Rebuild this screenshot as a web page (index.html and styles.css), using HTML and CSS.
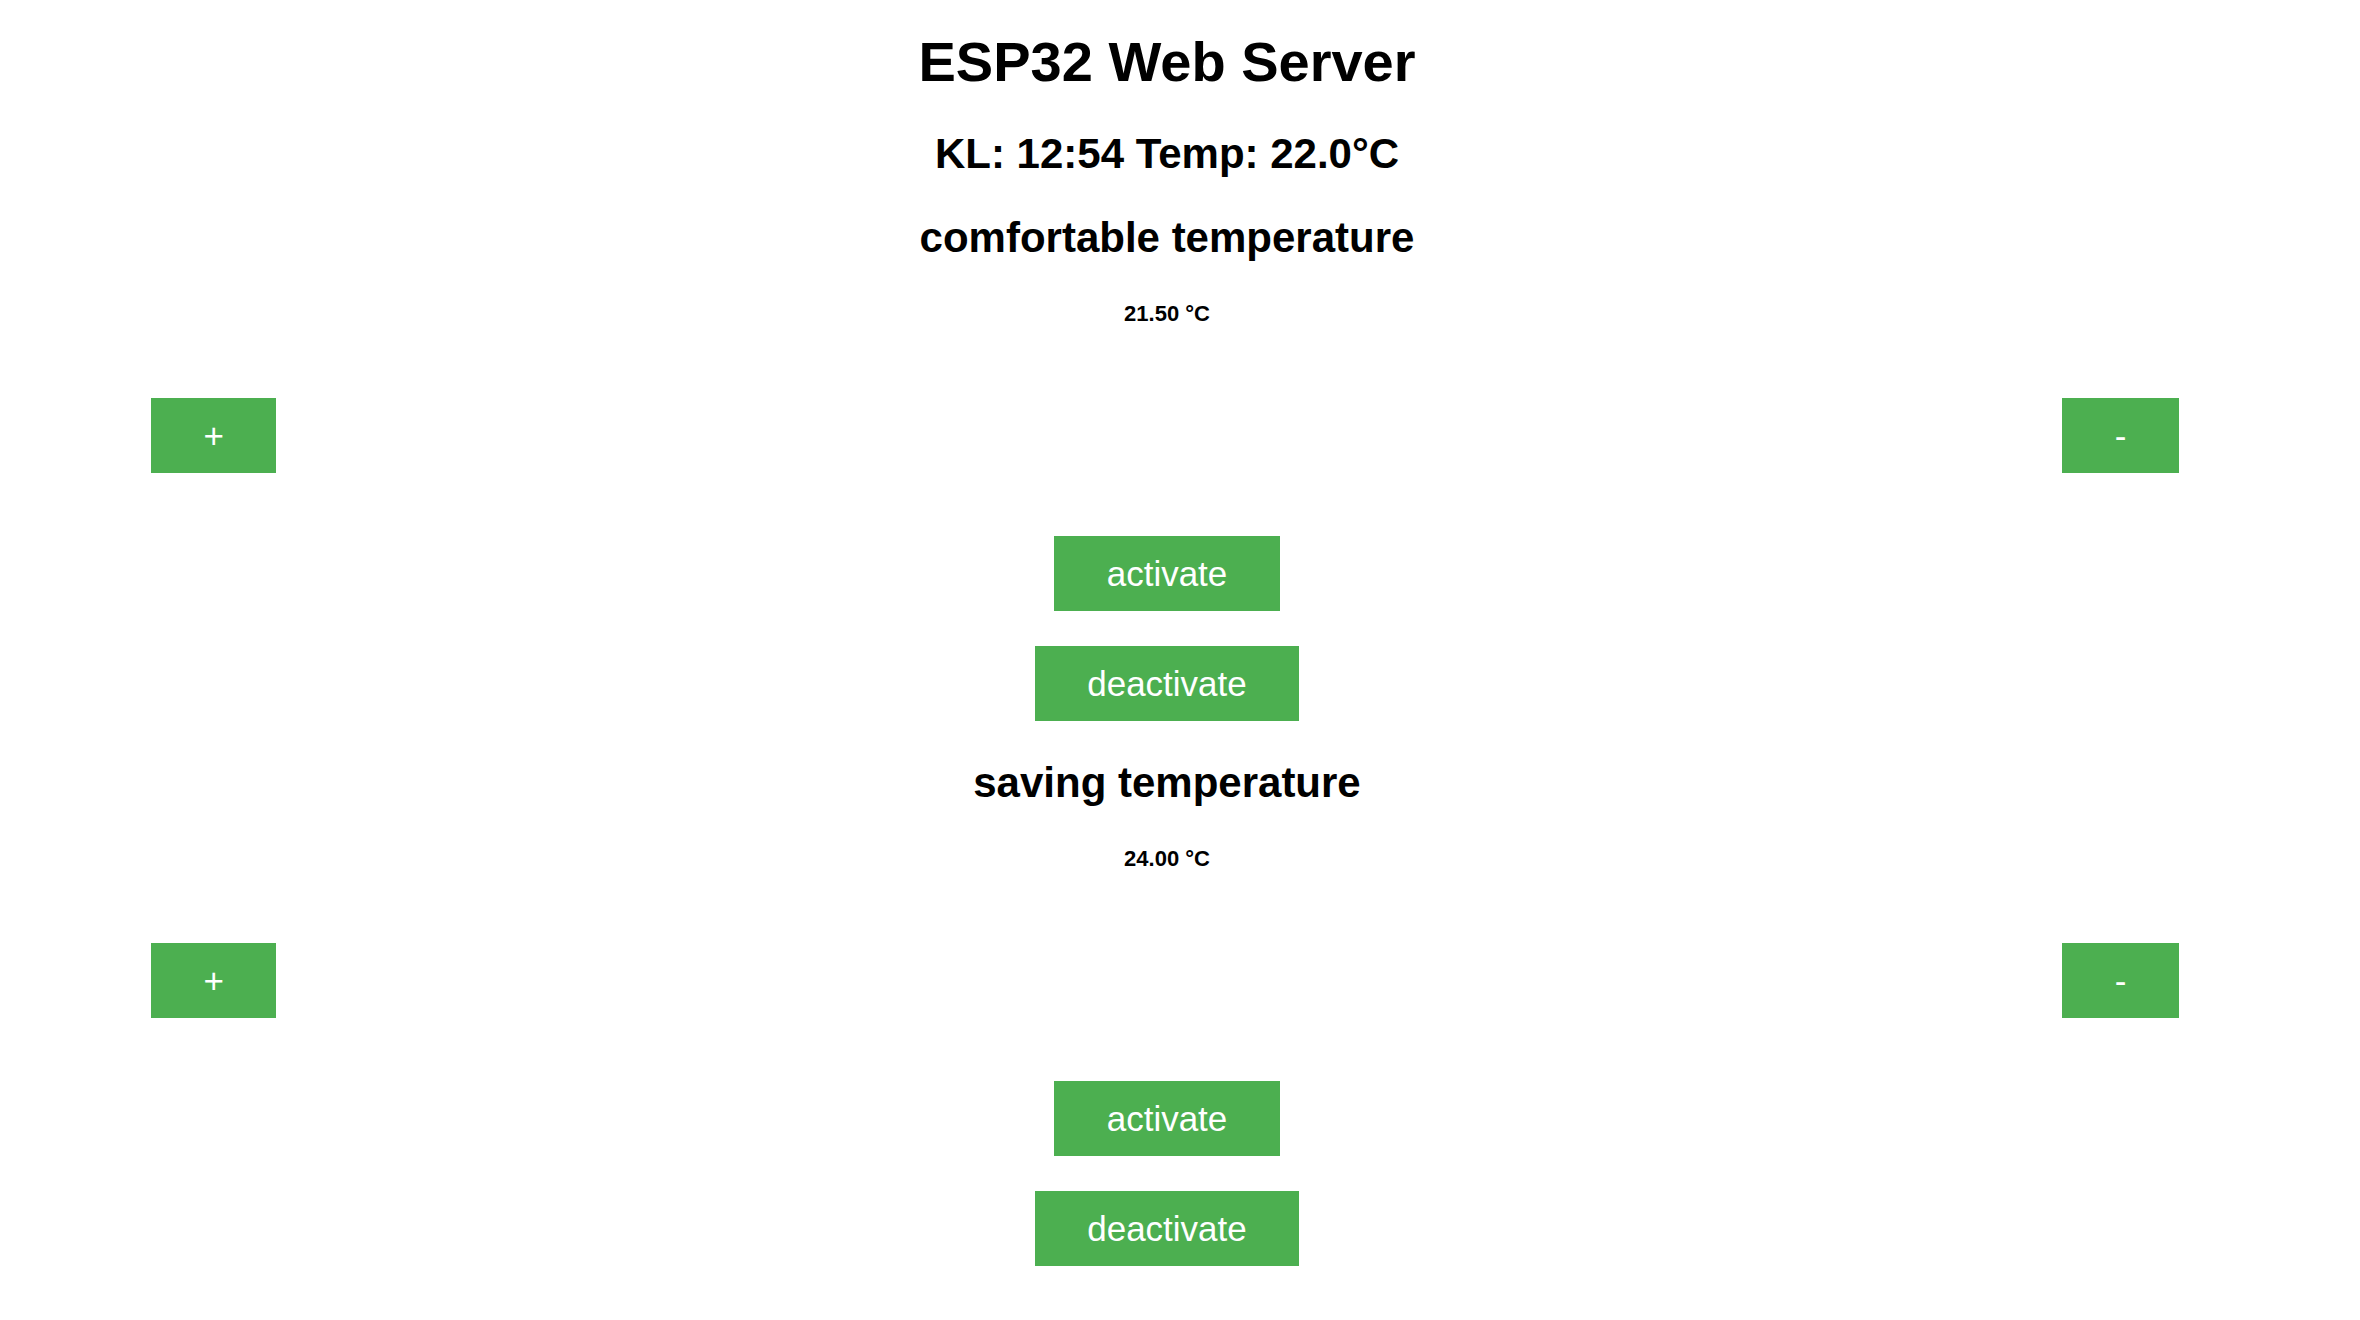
FILE: index.html
```html
<!DOCTYPE html>
<html>
<head>
<meta charset="utf-8">
<title>ESP32 Web Server</title>
<link rel="stylesheet" href="styles.css">
</head>
<body>
<h1 class="title">ESP32 Web Server</h1>
<h2 class="status">KL: 12:54 Temp: 22.0°C</h2>

<section class="block">
  <h2 class="block-title">comfortable temperature</h2>
  <p class="value">21.50 °C</p>
  <div class="adjust">
    <button class="button">+</button>
    <button class="button">-</button>
  </div>
  <div class="actions">
    <button class="button">activate</button>
    <button class="button">deactivate</button>
  </div>
</section>

<section class="block">
  <h2 class="block-title">saving temperature</h2>
  <p class="value">24.00 °C</p>
  <div class="adjust">
    <button class="button">+</button>
    <button class="button">-</button>
  </div>
  <div class="actions">
    <button class="button">activate</button>
    <button class="button">deactivate</button>
  </div>
</section>
</body>
</html>
```

FILE: styles.css
```css
html, body {
  margin: 0;
  padding: 0;
  background: #ffffff;
}

body {
  font-family: "Liberation Sans", Arial, Helvetica, sans-serif;
  color: #000000;
  text-align: center;
  display: flex;
  flex-direction: column;
  padding-right: 26px;
}

.title {
  margin: 30px 0 0;
  font-size: 56px;
  line-height: 64px;
  font-weight: bold;
}

.status {
  margin: 36px 0 0;
  font-size: 42px;
  line-height: 48px;
  font-weight: bold;
}

.block {
  display: flex;
  flex-direction: column;
  align-items: stretch;
  margin-top: 36px;
}

.block + .block {
  margin-top: 38px;
}

.block-title {
  margin: 0;
  font-size: 42px;
  line-height: 48px;
  font-weight: bold;
}

.value {
  margin: 39px 0 0;
  font-size: 22px;
  line-height: 26px;
  font-weight: bold;
}

.adjust {
  display: flex;
  justify-content: space-between;
  padding: 0 155px 0 151px;
  margin-top: 71px;
}

.actions {
  display: flex;
  flex-direction: column;
  align-items: center;
  gap: 35px;
  margin-top: 63px;
}

.button {
  background-color: #4CAF50;
  border: none;
  color: #ffffff;
  font-family: "Liberation Sans", Arial, Helvetica, sans-serif;
  font-size: 35px;
  line-height: 40px;
  padding: 17.5px 52.5px;
  margin: 0;
  cursor: pointer;
}
```
